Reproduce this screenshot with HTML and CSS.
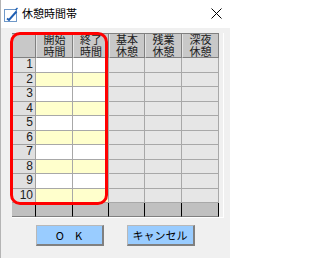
FILE: index.html
```html
<!DOCTYPE html>
<html lang="ja">
<head>
<meta charset="utf-8">
<link rel="stylesheet" href="styles.css">
</head>
<body>
<div class="window">
  <div class="titlebar">
    <svg class="appicon" width="16" height="16" viewBox="0 0 16 16">
      <rect x="1.5" y="2.5" width="12" height="12" fill="#ffffff" stroke="#6f98c8"/>
      <path d="M4 11.5 L6 13 L13.5 4.5" fill="none" stroke="#1f5fb4" stroke-width="2"/>
      <path d="M12.5 3 L14.5 1" fill="none" stroke="#1f5fb4" stroke-width="1.5"/>
    </svg>
    <span class="title">休憩時間帯</span>
    <svg class="close" width="11" height="11" viewBox="0 0 11 11">
      <path d="M0.5 0.5 L10.5 10.5 M10.5 0.5 L0.5 10.5" stroke="#000" stroke-width="1"/>
    </svg>
  </div>
  <div class="client">
    <div class="frame">
      <div class="grid">
        <div class="hd corner"></div>
        <div class="hd">開始<br>時間</div>
        <div class="hd">終了<br>時間</div>
        <div class="hd">基本<br>休憩</div>
        <div class="hd">残業<br>休憩</div>
        <div class="hd">深夜<br>休憩</div>

        <div class="rh">1</div><div class="c w"></div><div class="c w"></div><div class="c g"></div><div class="c g"></div><div class="c g"></div>
        <div class="rh">2</div><div class="c y"></div><div class="c y"></div><div class="c g"></div><div class="c g"></div><div class="c g"></div>
        <div class="rh">3</div><div class="c w"></div><div class="c w"></div><div class="c g"></div><div class="c g"></div><div class="c g"></div>
        <div class="rh">4</div><div class="c y"></div><div class="c y"></div><div class="c g"></div><div class="c g"></div><div class="c g"></div>
        <div class="rh">5</div><div class="c w"></div><div class="c w"></div><div class="c g"></div><div class="c g"></div><div class="c g"></div>
        <div class="rh">6</div><div class="c y"></div><div class="c y"></div><div class="c g"></div><div class="c g"></div><div class="c g"></div>
        <div class="rh">7</div><div class="c w"></div><div class="c w"></div><div class="c g"></div><div class="c g"></div><div class="c g"></div>
        <div class="rh">8</div><div class="c y"></div><div class="c y"></div><div class="c g"></div><div class="c g"></div><div class="c g"></div>
        <div class="rh">9</div><div class="c w"></div><div class="c w"></div><div class="c g"></div><div class="c g"></div><div class="c g"></div>
        <div class="rh">10</div><div class="c y"></div><div class="c y"></div><div class="c g"></div><div class="c g"></div><div class="c g"></div>

        <div class="ft"></div><div class="ft"></div><div class="ft"></div><div class="ft"></div><div class="ft"></div><div class="ft"></div>
      </div>
    </div>
    <div class="buttons">
      <button class="btn">O　K</button>
      <button class="btn">キャンセル</button>
    </div>
  </div>
  <div class="highlight"></div>
</div>
</body>
</html>
```
FILE: styles.css
```css
html, body {
  margin: 0;
  padding: 0;
}
body {
  font-family: "Noto Sans CJK JP", "Noto Sans", sans-serif;
  color: #000;
}
.window {
  position: relative;
  width: 230px;
  height: 258px;
  background: #f0f0f0;
  box-sizing: border-box;
  border-left: 1px solid #b4b4b4;
  overflow: hidden;
}
.titlebar {
  height: 28px;
  background: #ffffff;
  display: flex;
  align-items: center;
  padding-left: 2px;
}
.appicon {
  display: block;
  margin-top: 1px;
}
.title {
  font-size: 11px;
  line-height: 13px;
  margin-left: 3px;
  margin-top: -1px;
}
.close {
  display: block;
  margin-left: auto;
  margin-right: 8px;
  margin-top: -2px;
}
.client {
  padding: 5px 0 0 11px;
}
.frame {
  width: 211px;
  border-right: 1px solid #ffffff;
  border-bottom: 1px solid #ffffff;
}
.grid {
  display: grid;
  grid-template-columns: 24px 37px 36px 36px 37px 37px;
  grid-template-rows: 24px repeat(10, 14.5px) 14px;
  width: 207px;
  border-top: 1px solid #808080;
}
.grid > div {
  box-sizing: border-box;
}
.hd {
  background: #c8c8c8;
  border-right: 1px solid #808080;
  border-bottom: 1px solid #808080;
  border-left: 1px solid #e4e4e4;
  font-size: 11px;
  line-height: 11.5px;
  text-align: center;
  color: #202020;
}
.corner {
  border-left: none;
}
.rh {
  background: #e0e0e0;
  border-right: 1px solid #a0a0a0;
  border-bottom: 1px solid #a0a0a0;
  font-family: "Liberation Sans", Arial, sans-serif;
  font-size: 12px;
  line-height: 13.5px;
  text-align: right;
  padding-right: 2px;
  color: #202020;
}
.c {
  border-right: 1px solid #a8a8a8;
  border-bottom: 1px solid #a8a8a8;
}
.w { background: #ffffff; }
.y { background: #ffffcc; }
.g { background: #e6e6e6; }
.ft {
  background: #c0c0c0;
  border-right: 1px solid #000000;
  border-bottom: 1px solid #808080;
}
.buttons {
  display: flex;
  justify-content: center;
  gap: 23px;
  margin-top: 7px;
  margin-left: -12px;
}
.btn {
  width: 68px;
  height: 21px;
  background: #99ccff;
  border-style: solid;
  border-width: 1px 2px 2px 1px;
  border-color: #b8b8b8 #808080 #808080 #b8b8b8;
  font-family: "Noto Sans CJK JP", "Noto Sans", sans-serif;
  font-size: 11px;
  line-height: 16px;
  padding: 0;
  color: #000;
}
.highlight {
  position: absolute;
  left: 9px;
  top: 32px;
  width: 98px;
  height: 173px;
  box-sizing: border-box;
  border: 3px solid #ff0000;
  border-radius: 10px;
  pointer-events: none;
}
```
